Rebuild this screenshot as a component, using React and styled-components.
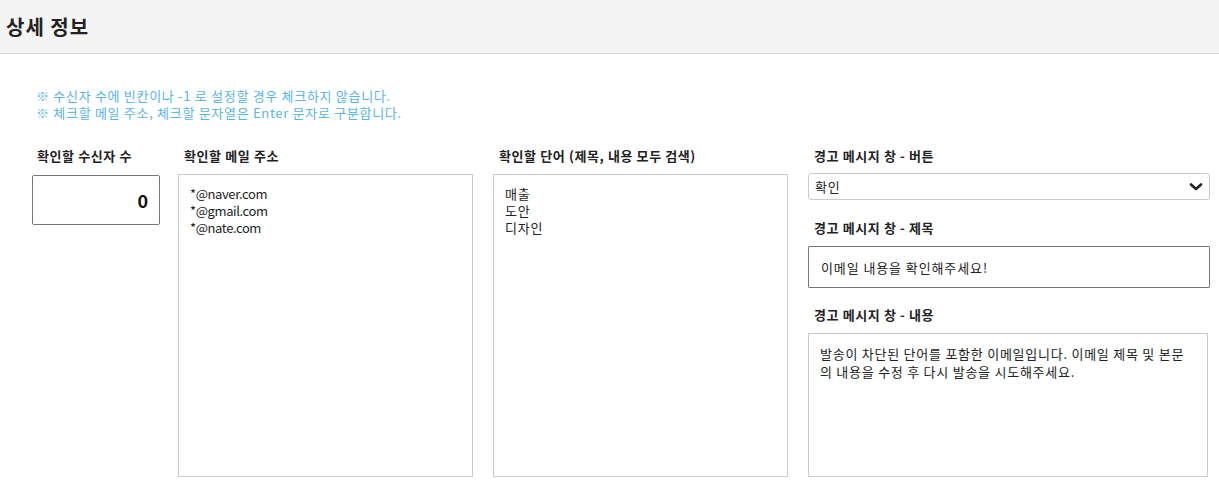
import React from "react";
import styled, { createGlobalStyle } from "styled-components";

const Global = createGlobalStyle`
  html, body { margin: 0; padding: 0; background: #fff; }
  body { font-family: "Malgun Gothic", "Noto Sans CJK KR", "Noto Sans", sans-serif; color: #222; }
  * { box-sizing: border-box; }
`;

const Page = styled.div`
  width: 1219px;
  height: 495px;
  overflow: hidden;
  background: #fff;
`;

const Header = styled.header`
  height: 54px;
  background: #f4f4f4;
  border-bottom: 1px solid #dcdcdc;
  display: flex;
  align-items: center;
  padding: 0 0 0 6px;
`;

const Title = styled.h1`
  margin: 0;
  font-size: 20px;
  font-weight: 700;
  color: #222;
  letter-spacing: 1px;
`;

const Notes = styled.div`
  padding: 33px 0 0 36px;
  font-size: 13px;
  line-height: 17px;
  letter-spacing: 0.7px;
  color: #58b6e6;
`;

const Row = styled.div`
  display: flex;
  align-items: flex-start;
  gap: 20px;
  padding: 26px 0 0 32px;
`;

const Column = styled.div`
  display: flex;
  flex-direction: column;
  flex: 0 0 ${(p) => p.$w}px;
  margin-right: ${(p) => p.$mr || 0}px;
`;

const Label = styled.div`
  font-size: 13px;
  font-weight: 700;
  color: #222;
  line-height: 17px;
  letter-spacing: 0.6px;
  padding-left: ${(p) => p.$indent ?? 6}px;
  margin-bottom: 10px;
  margin-top: ${(p) => p.$top || 0}px;
`;

const NumberBox = styled.div`
  height: 50px;
  border: 1px solid #777;
  border-radius: 2px;
  display: flex;
  align-items: center;
  justify-content: flex-end;
  padding-right: 11px;
  font-size: 18px;
  font-weight: 700;
  color: #111;
  margin-top: 1px;
`;

const TextArea = styled.div`
  height: ${(p) => p.$h}px;
  width: ${(p) => (p.$w ? `${p.$w}px` : "auto")};
  border: 1px solid #cbcbcb;
  padding: ${(p) => p.$pad || "11px 11px"};
  font-size: 13px;
  line-height: ${(p) => p.$lh || 17}px;
  letter-spacing: ${(p) => p.$ls ?? 0.75}px;
  color: #222;
  white-space: pre-wrap;
  word-break: break-all;
`;

const Select = styled.div`
  height: 27px;
  margin-top: -1px;
  border: 1px solid #cbcbcb;
  border-radius: 3px;
  display: flex;
  align-items: center;
  justify-content: space-between;
  padding: 0 6px 0 6px;
  font-size: 13px;
  letter-spacing: 0.75px;
  color: #222;
`;

const Input = styled.div`
  height: 42px;
  border: 1px solid #777;
  border-radius: 1px;
  display: flex;
  align-items: center;
  padding-left: 12px;
  font-size: 13px;
  letter-spacing: 0.9px;
  color: #222;
`;

const Chevron = () => (
  <svg width="14" height="10" viewBox="0 0 14 10">
    <path d="M2 2.5 L7 7 L12 2.5" fill="none" stroke="#222" strokeWidth="2.6" strokeLinecap="round" strokeLinejoin="round" />
  </svg>
);

export default function App() {
  return (
    <Page>
      <Global />
      <Header>
        <Title>상세 정보</Title>
      </Header>
      <Notes>
        <div>※ 수신자 수에 빈칸이나 -1 로 설정할 경우 체크하지 않습니다.</div>
        <div>※ 체크할 메일 주소, 체크할 문자열은 Enter 문자로 구분합니다.</div>
      </Notes>
      <Row>
        <Column $w={128} $mr={-2}>
          <Label $indent={5}>확인할 수신자 수</Label>
          <NumberBox>0</NumberBox>
        </Column>
        <Column $w={295}>
          <Label>확인할 메일 주소</Label>
          <TextArea $h={303} $pad="10px 11px" $ls={-0.4}>{"*@naver.com\n*@gmail.com\n*@nate.com"}</TextArea>
        </Column>
        <Column $w={295}>
          <Label>확인할 단어 (제목, 내용 모두 검색)</Label>
          <TextArea $h={303} $pad="10px 11px">{"매출\n도안\n디자인"}</TextArea>
        </Column>
        <Column $w={402}>
          <Label>경고 메시지 창 - 버튼</Label>
          <Select>
            <span>확인</span>
            <Chevron />
          </Select>
          <Label $top={19}>경고 메시지 창 - 제목</Label>
          <Input>이메일 내용을 확인해주세요!</Input>
          <Label $top={18}>경고 메시지 창 - 내용</Label>
          <TextArea $h={144} $w={400} $pad="11px 11px" $lh={18}>
            발송이 차단된 단어를 포함한 이메일입니다. 이메일 제목 및 본문의 내용을 수정 후 다시 발송을 시도해주세요.
          </TextArea>
        </Column>
      </Row>
    </Page>
  );
}
